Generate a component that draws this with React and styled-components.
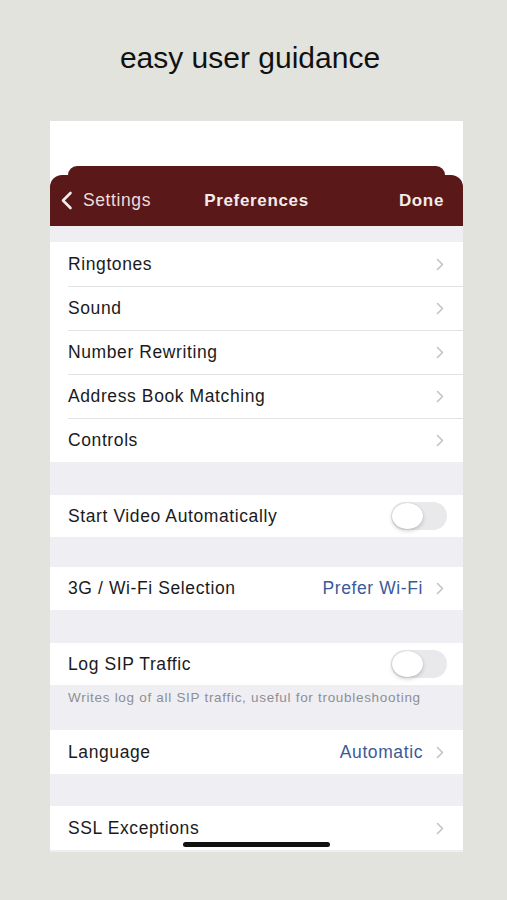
import React from 'react';
import styled, { createGlobalStyle } from 'styled-components';

const GlobalStyle = createGlobalStyle`
  html, body {
    margin: 0;
    padding: 0;
    background: #e1e3dc;
  }
  body {
    font-family: "Liberation Sans", Arial, sans-serif;
  }
`;

const Page = styled.div`
  width: 507px;
  height: 900px;
  overflow: hidden;
  background: #e1e3dc;
`;

const Headline = styled.h1`
  margin: 43px 0 0;
  padding-right: 7px;
  height: 30px;
  font-size: 30px;
  line-height: 30px;
  font-weight: 400;
  text-align: center;
  color: #111;
`;

const Screen = styled.div`
  position: relative;
  width: 413px;
  margin: 48px 0 0 50px;
  background: #fff;
  overflow: hidden;
`;

const StatusArea = styled.div`
  height: 45px;
  background: #fff;
`;

const NavTab = styled.div`
  height: 9px;
  margin: 0 18px;
  background: #5a1819;
  border-radius: 10px 10px 0 0;
`;

const NavBar = styled.div`
  height: 51px;
  display: grid;
  grid-template-columns: 1fr auto 1fr;
  align-items: center;
  padding: 0 10px;
  background: #5a1819;
  border-radius: 12px 12px 0 0;
  color: #f3ecec;
  font-size: 17px;
  letter-spacing: 0.65px;
`;

const BackButton = styled.div`
  display: flex;
  align-items: center;
  gap: 10px;
  font-size: 17.5px;
  letter-spacing: 0.6px;
  color: #eadede;
`;

const NavTitle = styled.div`
  font-weight: 700;
`;

const DoneButton = styled.div`
  justify-self: end;
  margin-right: 9px;
  font-weight: 700;
`;

const Content = styled.div`
  background: #efeff3;
`;

const Gap = styled.div`
  height: ${(p) => p.$h}px;
`;

const Group = styled.div`
  background: #fff;
`;

const Row = styled.div`
  box-sizing: border-box;
  height: ${(p) => p.$h || 44}px;
  margin-left: 18px;
  display: flex;
  align-items: center;
  padding-right: ${(p) => (p.$toggle ? 16 : 19)}px;
  font-size: 17.5px;
  letter-spacing: 0.6px;
  color: #1a1a1c;

  & + & {
    border-top: 1px solid #e3e3e7;
  }
`;

const Label = styled.span`
  flex: 1;
`;

const Value = styled.span`
  color: #3b5a99;
  margin-right: 13px;
`;

const Footer = styled.div`
  box-sizing: border-box;
  height: 45px;
  padding: 5px 18px 0;
  font-size: 13.5px;
  line-height: 16px;
  letter-spacing: 0.7px;
  color: #8e8e93;
`;

const Track = styled.div`
  width: 56px;
  height: 28px;
  border-radius: 14px;
  background: #e9e9eb;
  display: flex;
  align-items: center;
  padding: 0 1px;
  box-sizing: border-box;
`;

const Knob = styled.div`
  width: 31px;
  height: 26px;
  border-radius: 50%;
  background: #fff;
  box-shadow: 0 2px 4px rgba(0, 0, 0, 0.18), 0 0 1px rgba(0, 0, 0, 0.2);
`;

const HomeIndicator = styled.div`
  position: absolute;
  left: 133px;
  bottom: 5px;
  width: 147px;
  height: 5px;
  border-radius: 3px;
  background: #111;
`;

const Chevron = () => (
  <svg width="8" height="13" viewBox="0 0 8 13">
    <path d="M1.5 1.5 L6.5 6.5 L1.5 11.5" fill="none" stroke="#c4c4c8" strokeWidth="1.6" strokeLinecap="round" strokeLinejoin="round" />
  </svg>
);

const BackChevron = () => (
  <svg width="13" height="19" viewBox="0 0 13 19">
    <path d="M10.5 2 L3 9.5 L10.5 17" fill="none" stroke="#f3ecec" strokeWidth="2.6" strokeLinecap="round" strokeLinejoin="round" />
  </svg>
);

const Toggle = () => (
  <Track>
    <Knob />
  </Track>
);

const LinkRow = ({ label, value, h }) => (
  <Row $h={h}>
    <Label>{label}</Label>
    {value && <Value>{value}</Value>}
    <Chevron />
  </Row>
);

const ToggleRow = ({ label, h }) => (
  <Row $h={h} $toggle>
    <Label>{label}</Label>
    <Toggle />
  </Row>
);

const mainItems = ['Ringtones', 'Sound', 'Number Rewriting', 'Address Book Matching', 'Controls'];

export default function App() {
  return (
    <Page>
      <GlobalStyle />
      <Headline>easy user guidance</Headline>
      <Screen>
        <StatusArea />
        <NavTab />
        <NavBar>
          <BackButton>
            <BackChevron />
            <span>Settings</span>
          </BackButton>
          <NavTitle>Preferences</NavTitle>
          <DoneButton>Done</DoneButton>
        </NavBar>
        <Content>
          <Gap $h={16} />
          <Group>
            {mainItems.map((item) => (
              <LinkRow key={item} label={item} />
            ))}
          </Group>
          <Gap $h={33} />
          <Group>
            <ToggleRow label="Start Video Automatically" h={42} />
          </Group>
          <Gap $h={30} />
          <Group>
            <LinkRow label="3G / Wi-Fi Selection" value="Prefer Wi-Fi" h={43} />
          </Group>
          <Gap $h={33} />
          <Group>
            <ToggleRow label="Log SIP Traffic" h={42} />
          </Group>
          <Footer>Writes log of all SIP traffic, useful for troubleshooting</Footer>
          <Group>
            <LinkRow label="Language" value="Automatic" />
          </Group>
          <Gap $h={32} />
          <Group>
            <LinkRow label="SSL Exceptions" />
          </Group>
          <Gap $h={2} />
        </Content>
        <HomeIndicator />
      </Screen>
    </Page>
  );
}
